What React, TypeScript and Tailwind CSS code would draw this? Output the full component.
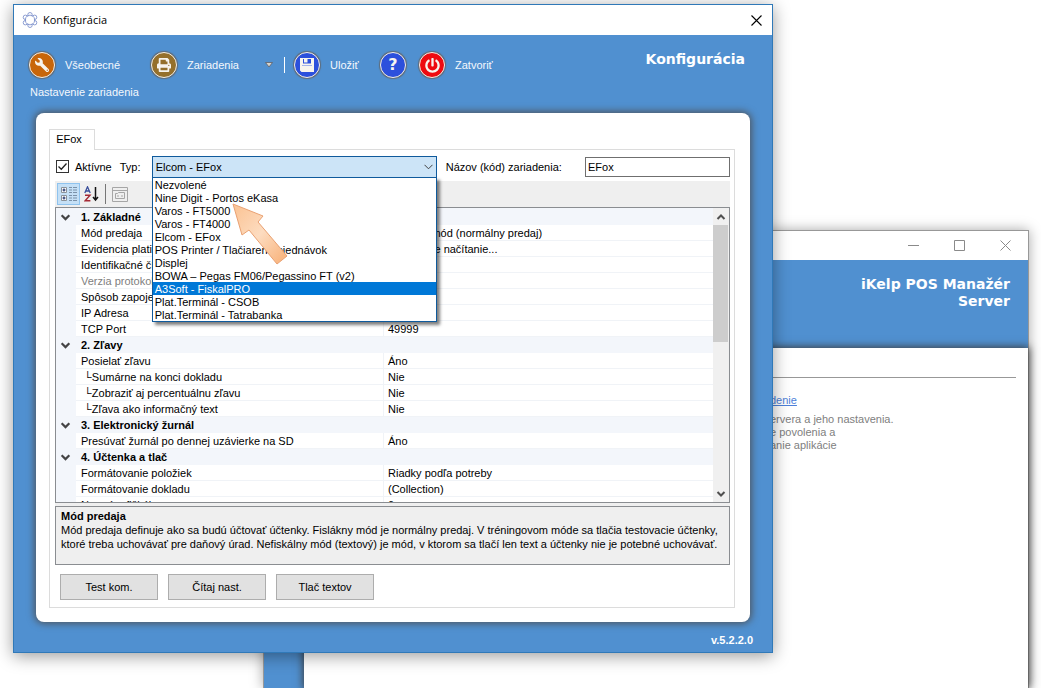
import React, { useState } from 'react';
import { FaWrench, FaPrint, FaPowerOff } from 'react-icons/fa';

interface PropertyRow {
  name: string;
  value?: string;
  category?: boolean;
  muted?: boolean;
  nested?: boolean;
}

const deviceTypes: string[] = [
  'Nezvolené',
  'Nine Digit - Portos eKasa',
  'Varos - FT5000',
  'Varos - FT4000',
  'Elcom - EFox',
  'POS Printer / Tlačiareň objednávok',
  'Displej',
  'BOWA – Pegas FM06/Pegassino FT (v2)',
  'A3Soft - FiskalPRO',
  'Plat.Terminál - CSOB',
  'Plat.Terminál - Tatrabanka',
];

const properties: PropertyRow[] = [
  { name: '1. Základné', category: true },
  { name: 'Mód predaja', value: 'Fiškálny mód (normálny predaj)' },
  { name: 'Evidencia platidiel', value: 'Stlačte pre načítanie...' },
  { name: 'Identifikačné číslo' },
  { name: 'Verzia protokolu', muted: true },
  { name: 'Spôsob zapojenia' },
  { name: 'IP Adresa' },
  { name: 'TCP Port', value: '49999' },
  { name: '2. Zľavy', category: true },
  { name: 'Posielať zľavu', value: 'Áno' },
  { name: '└Sumárne na konci dokladu', value: 'Nie', nested: true },
  { name: '└Zobraziť aj percentuálnu zľavu', value: 'Nie', nested: true },
  { name: '└Zľava ako informačný text', value: 'Nie', nested: true },
  { name: '3. Elektronický žurnál', category: true },
  { name: 'Presúvať žurnál po dennej uzávierke na SD', value: 'Áno' },
  { name: '4. Účtenka a tlač', category: true },
  { name: 'Formátovanie položiek', value: 'Riadky podľa potreby' },
  { name: 'Formátovanie dokladu', value: '(Collection)' },
  { name: 'Normá o fiškál', value: '0' },
];

const Chevron: React.FC<{ up?: boolean; className?: string }> = ({ up, className }) => (
  <svg viewBox="0 0 10 10" className={className} fill="none" stroke="currentColor" strokeWidth="2">
    <path d={up ? 'M1.5 7 5 3.5 8.5 7' : 'M1.5 3 5 6.5 8.5 3'} />
  </svg>
);

const AppLogo: React.FC = () => (
  <svg viewBox="0 0 16 16" className="size-4" fill="none" stroke="#7288c8" strokeWidth="0.8">
    <circle cx="8" cy="8" r="4.8" />
    <circle cx="8" cy="2.7" r="2.2" />
    <circle cx="12.6" cy="5.3" r="2.2" />
    <circle cx="12.6" cy="10.7" r="2.2" />
    <circle cx="8" cy="13.3" r="2.2" />
    <circle cx="3.4" cy="10.7" r="2.2" />
    <circle cx="3.4" cy="5.3" r="2.2" />
    <circle cx="8" cy="8" r="4" fill="#fff" stroke="none" />
  </svg>
);

const RoundIcon: React.FC<{ color: string; children: React.ReactNode }> = ({ color, children }) => (
  <span
    className={`flex size-[26px] shrink-0 items-center justify-center rounded-full border border-[#f4f0e8] text-[#f7f4ee] shadow-[0_0_1px_1px_#5f6b78] ${color}`}
  >
    {children}
  </span>
);

const ServerWindow: React.FC = () => (
  <section className="absolute top-[230px] right-3 bottom-0 left-[263px] flex flex-col border border-b-0 border-[#989898] bg-[#5090d0] shadow-[0_0_12px_rgba(0,0,0,0.35)]">
    <div className="flex h-[29px] shrink-0 items-center justify-end bg-white text-[#8a8a8a]">
      <button aria-label="Minimalizovať" className="flex w-[46px] justify-center">
        <svg viewBox="0 0 11 11" className="size-[11px]" fill="none" stroke="currentColor"><path d="M0 5.5h11" /></svg>
      </button>
      <button aria-label="Maximalizovať" className="flex w-[46px] justify-center">
        <svg viewBox="0 0 11 11" className="size-[11px]" fill="none" stroke="currentColor"><path d="M.5.5h10v10H.5z" /></svg>
      </button>
      <button aria-label="Zavrieť" className="flex w-[46px] justify-center">
        <svg viewBox="0 0 11 11" className="size-[11px]" fill="none" stroke="currentColor"><path d="M.5.5l10 10M10.5.5l-10 10" /></svg>
      </button>
    </div>
    <header className="h-[88px] shrink-0 pt-4 pr-[18px] text-right">
      <h1 className="ml-auto w-40 font-['DejaVu_Sans',sans-serif] text-sm leading-[17px] font-bold text-white">
        iKelp POS Manažér Server
      </h1>
    </header>
    <main className="ml-10 flex-1 bg-white pt-[29px] pr-3 text-[#808080] shadow-[0_0_8px_1px_#3d3d3d]">
      <hr className="border-[#989898]" />
      <div className="ml-[466px] pt-4">
        <a href="#manual" className="block leading-[13px] text-[#4d80d9] underline">denie</a>
        <p className="pt-[6px] leading-[13px]">
          ervera a jeho nastavenia.<br />
          e povolenia a<br />
          anie aplikácie
        </p>
      </div>
    </main>
  </section>
);

const Toolbar: React.FC = () => (
  <nav className="flex items-center pt-[17px] pl-[15px] text-[#f4f8fd]">
    <button className="flex w-[122px] items-center gap-[10px]">
      <RoundIcon color="bg-[#c8660a]"><FaWrench className="size-[14px] -scale-x-100" /></RoundIcon>
      Všeobecné
    </button>
    <button className="flex w-[122px] items-center gap-[10px]">
      <RoundIcon color="bg-[#95702c]"><FaPrint className="size-[14px]" /></RoundIcon>
      Zariadenia
      <svg viewBox="0 0 8 6" className="ml-auto h-[6px] w-2">
        <path d="M.5.5h7L4 5z" fill="#d8d4cc" stroke="#5d6068" strokeWidth="0.8" />
      </svg>
    </button>
    <span className="mr-[9px] ml-[11px] h-4 w-px bg-white" />
    <button className="flex w-[86px] items-center gap-[10px]">
      <RoundIcon color="bg-[#2c50dc]">
        <svg viewBox="0 0 14 14" className="size-[14px]">
          <path fill="currentColor" fillRule="evenodd" d="M0 0h14v14H1.500L0 12.500zM3 1v4.500h8V1z" />
          <path fill="currentColor" d="M4 1h3.500v3.500H4z" />
          <path d="M2 7.500h10" stroke="#8fa3ea" strokeWidth="0.8" />
        </svg>
      </RoundIcon>
      Uložiť
    </button>
    <button aria-label="Pomoc" className="w-[39px]">
      <RoundIcon color="bg-[#2c50dc]">
        <span className="font-['DejaVu_Sans',sans-serif] text-base leading-none font-bold">?</span>
      </RoundIcon>
    </button>
    <button className="flex items-center gap-[10px]">
      <RoundIcon color="bg-[#ee0a10]"><FaPowerOff className="size-[15px]" /></RoundIcon>
      Zatvoriť
    </button>
  </nav>
);

const TypeSelect: React.FC = () => {
  const [value, setValue] = useState('Elcom - EFox');
  const [highlighted, setHighlighted] = useState('A3Soft - FiskalPRO');

  return (
    <div className="relative w-[285px]">
      <select
        id="device-type"
        value={value}
        onChange={(e) => setValue(e.target.value)}
        className="block h-[22px] w-full appearance-none border border-[#0f5a9c] bg-[#cce4f7] px-[3px] text-black outline-none"
      >
        {deviceTypes.map((type) => (
          <option key={type}>{type}</option>
        ))}
      </select>
      <svg viewBox="0 0 9 6" className="pointer-events-none absolute top-2 right-1 h-[6px] w-[9px]" fill="none" stroke="#404040">
        <path d="M.5.8l4 4 4-4" />
      </svg>
      <ul
        role="listbox"
        aria-label="Typ"
        className="absolute top-[21px] left-0 z-10 w-full border border-[#0f5a9c] bg-white shadow-[3px_3px_3px_rgba(0,0,0,0.5)]"
      >
        {deviceTypes.map((type) => (
          <li
            key={type}
            role="option"
            aria-selected={type === highlighted}
            onMouseEnter={() => setHighlighted(type)}
            onClick={() => setValue(type)}
            className={`px-[2px] pt-[2px] leading-[11px] ${type === highlighted ? 'bg-[#0078d7] text-white' : ''}`}
          >
            {type}
          </li>
        ))}
      </ul>
      <svg viewBox="0 0 56 62" className="pointer-events-none absolute top-[47px] left-20 z-20 h-[62px] w-14">
        <defs>
          <linearGradient id="arrow" x1="0" y1="0.2" x2="0.8" y2="1">
            <stop offset="0" stopColor="#fbc79b" />
            <stop offset="0.5" stopColor="#fddcc0" />
            <stop offset="1" stopColor="#f9b884" />
          </linearGradient>
        </defs>
        <path d="M1 1 31 13 26 19 55 53 45 61 17 27 10 32z" fill="url(#arrow)" stroke="#e9a172" strokeLinejoin="round" />
      </svg>
    </div>
  );
};

const GridToolbar: React.FC = () => (
  <div className="flex h-[26px] items-center bg-[#efefef] pl-[2px]">
    <button aria-label="Podľa kategórií" className="flex h-[22px] w-[23px] items-center justify-center border border-[#8fc3ee] bg-[#c5e0f6]">
      <svg viewBox="0 0 18 16" className="h-4 w-[18px]" fill="none">
        <path d="M1.500 1.500h5v5h-5zM1.500 9.500h5v5h-5z" fill="#fff" stroke="#8b9299" />
        <path d="M2.500 4h3M4 2.500v3M2.500 12h3M4 10.500v3" stroke="#1c2f68" strokeWidth="1.200" />
        <path d="M9 1.500h3M13 1.500h4M9 4h3M13 4h4M9 6.500h3M13 6.500h4M9 9.500h3M13 9.500h4M9 12h3M13 12h4M9 14.500h3M13 14.500h4" stroke="#7b91a8" />
      </svg>
    </button>
    <button aria-label="Podľa abecedy" className="flex h-[22px] w-[23px] items-center justify-center">
      <svg viewBox="0 0 16 16" className="size-4" fill="none">
        <path d="M.8 7 3.500.8 6.200 7M1.800 5h3.400" stroke="#3a4f9c" strokeWidth="1.300" />
        <path d="M1 9.300h5L1.200 14.700h5.200" stroke="#a52a35" strokeWidth="1.400" />
        <path d="M11.500 1v12M9 11l2.500 3L14 11" stroke="#111" strokeWidth="1.500" />
      </svg>
    </button>
    <span className="ml-[2px] h-5 w-px bg-[#777]" />
    <button aria-label="Stránky vlastností" disabled className="ml-[2px] flex h-[22px] w-6 items-center justify-center">
      <svg viewBox="0 0 16 15" className="h-[15px] w-4" fill="none" stroke="#a6a6a6">
        <path d="M.5.5h15v14H.5zM.5 3.500h15M3.500 6.500h2l1-1h6v6h-9zM5 9h2M9 9h2" />
      </svg>
    </button>
  </div>
);

const PropertyGrid: React.FC = () => (
  <div className="flex h-[296px] border border-[#8a8d91]">
    <div className="min-w-0 flex-1 overflow-hidden">
      <table className="w-full table-fixed border-separate border-spacing-0 border-t border-[#f3f6fb]">
        <colgroup>
          <col className="w-5" />
          <col className="w-[308px]" />
          <col />
        </colgroup>
        <tbody>
          {properties.map((row) =>
            row.category ? (
              <tr key={row.name} className="h-4 bg-[#f3f6fb] leading-[15px]">
                <td className="p-0"><Chevron className="ml-1 size-[11px] text-[#444]" /></td>
                <th colSpan={2} className="p-0 pl-[5px] text-left font-bold">{row.name}</th>
              </tr>
            ) : (
              <tr key={row.name} className="h-4 leading-[13px]">
                <td className="bg-[#f3f6fb] p-0" />
                <td
                  className={`overflow-hidden border-r border-b border-[#f0f3f7] p-0 pt-[2px] whitespace-nowrap ${row.nested ? 'pl-2' : 'pl-[5px]'} ${row.muted ? 'text-[#808080]' : ''}`}
                >
                  {row.name}
                </td>
                <td className="border-b border-[#f0f3f7] p-0 pt-[2px] pl-1">{row.value}</td>
              </tr>
            )
          )}
        </tbody>
      </table>
    </div>
    <div className="flex w-4 flex-col bg-[#f0f0f0] text-[#505050]">
      <button aria-label="Nahor" className="flex h-[17px] items-center justify-center"><Chevron up className="size-[10px]" /></button>
      <div className="h-[117px] w-[15px] bg-[#cdcdcd]" />
      <button aria-label="Nadol" className="mt-auto flex h-[17px] items-center justify-center"><Chevron className="size-[10px]" /></button>
    </div>
  </div>
);

const ConfigDialog: React.FC = () => {
  const [active, setActive] = useState(true);
  const [deviceName, setDeviceName] = useState('EFox');

  return (
    <section className="absolute top-1 right-[268px] left-[13px] border border-[#3079b8] bg-[#5090d0] shadow-[0_3px_16px_rgba(0,0,0,0.4)]">
      <div className="flex h-[30px] items-center bg-white pr-[10px] pl-2">
        <AppLogo />
        <span className="ml-[5px] font-['Open_Sans',sans-serif] text-[11px]">Konfigurácia</span>
        <button aria-label="Zavrieť" className="ml-auto">
          <svg viewBox="0 0 11 11" className="size-[11px]" fill="none" stroke="#000" strokeWidth="1.100">
            <path d="M.5.5l10 10M10.500.5l-10 10" />
          </svg>
        </button>
      </div>

      <header className="flex h-[78px] items-start justify-between pr-[27px]">
        <div>
          <Toolbar />
          <p className="pt-[6px] pl-4 leading-4 text-[#f4f8fd]">Nastavenie zariadenia</p>
        </div>
        <h1 className="pt-4 font-['DejaVu_Sans',sans-serif] text-sm leading-[17px] font-bold text-white">Konfigurácia</h1>
      </header>

      <main className="mx-[22px] rounded-lg bg-white pt-4 pr-[15px] pb-[14px] pl-[13px] shadow-[0_0_7px_2px_#4f5a66]">
        <div role="tablist" className="flex">
          <button role="tab" aria-selected="true" className="relative h-[21px] w-[46px] border border-b-0 border-[#dcdcdc] bg-white pr-[6px] pb-[2px] text-center">
            EFox
          </button>
        </div>
        <div role="tabpanel" className="-mt-px border border-[#dcdcdc] pr-1 pb-[7px] pl-[5px]">
          <div className="flex h-[31px] items-center pt-[2px]">
            <label className="flex items-center gap-[6px] pl-px">
              <input
                type="checkbox"
                checked={active}
                onChange={(e) => setActive(e.target.checked)}
                className="peer size-[13px] appearance-none border border-[#333] bg-white"
              />
              <svg viewBox="0 0 11 11" className="pointer-events-none invisible -ml-[18px] mr-px size-[11px] peer-checked:visible" fill="none" stroke="#222" strokeWidth="1.300">
                <path d="M1.500 5.500l2.800 2.800 5.200-5.800" />
              </svg>
              Aktívne
            </label>
            <label htmlFor="device-type" className="ml-2 w-8">Typ:</label>
            <TypeSelect />
            <label htmlFor="device-name" className="ml-[9px]">Názov (kód) zariadenia:</label>
            <input
              id="device-name"
              value={deviceName}
              onChange={(e) => setDeviceName(e.target.value)}
              className="ml-auto h-5 w-[145px] border border-[#6f6f6f] bg-white px-[2px] outline-none"
            />
          </div>
          <GridToolbar />
          <PropertyGrid />
          <div className="h-[3px] bg-[#efefef]" />
          <div className="h-[59px] border border-[#8a8d91] bg-[#efefef] px-[5px] pt-[2px] leading-[14px]">
            <h2 className="font-bold">Mód predaja</h2>
            <p>
              Mód predaja definuje ako sa budú účtovať účtenky. Fislákny mód je normálny predaj. V tréningovom móde sa tlačia testovacie účtenky,
              ktoré treba uchovávať pre daňový úrad. Nefiskálny mód (textový) je mód, v ktorom sa tlačí len text a účtenky nie je potebné uchovávať.
            </p>
          </div>
          <div className="mt-[9px] ml-[5px] flex gap-[10px]">
            {['Test kom.', 'Čítaj nast.', 'Tlač textov'].map((label) => (
              <button key={label} className="h-[26px] w-[98px] border border-[#adadad] bg-[#e1e1e1]">
                {label}
              </button>
            ))}
          </div>
        </div>
      </main>

      <footer className="flex h-[30px] items-center justify-end pt-[6px] pr-[19px] font-bold text-white">v.5.2.2.0</footer>
    </section>
  );
};

const App: React.FC = () => (
  <div className="relative h-screen overflow-hidden bg-white font-['Liberation_Sans',Arial,sans-serif] text-[11px] leading-4 text-black">
    <ServerWindow />
    <ConfigDialog />
  </div>
);

export default App;
